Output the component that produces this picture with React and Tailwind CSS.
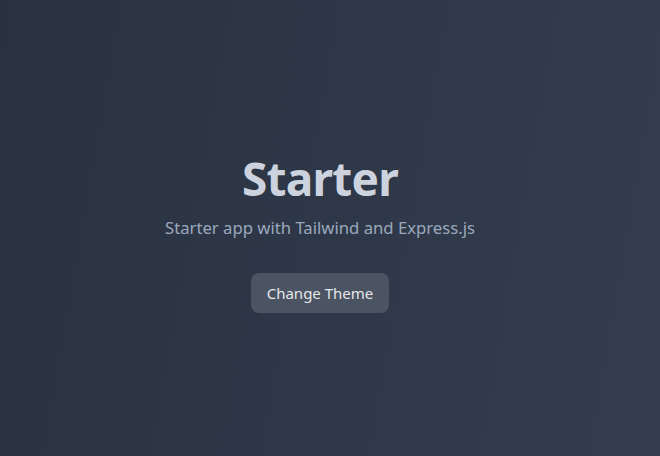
import React from 'react'

export default function App() {
  return (
    <div className="min-h-screen w-full bg-linear-[100deg] from-[#2a3241] to-[#333d4e] flex items-center justify-center pr-5 font-['Noto_Sans','Open_Sans',sans-serif]">
      <div className="flex flex-col items-center text-center pt-[7px]">
        <h1 className="text-[46px] leading-[56px] font-bold tracking-[-0.8px] text-[#cdd3de]">Starter</h1>
        <p className="mt-[9px] text-[16.7px] text-[#9aa8bd]">Starter app with Tailwind and Express.js</p>
        <button className="mt-[33px] h-10 px-4 rounded-lg bg-[#4b5462] text-[15px] text-[#e5e7eb]">
          Change Theme
        </button>
      </div>
    </div>
  )
}
